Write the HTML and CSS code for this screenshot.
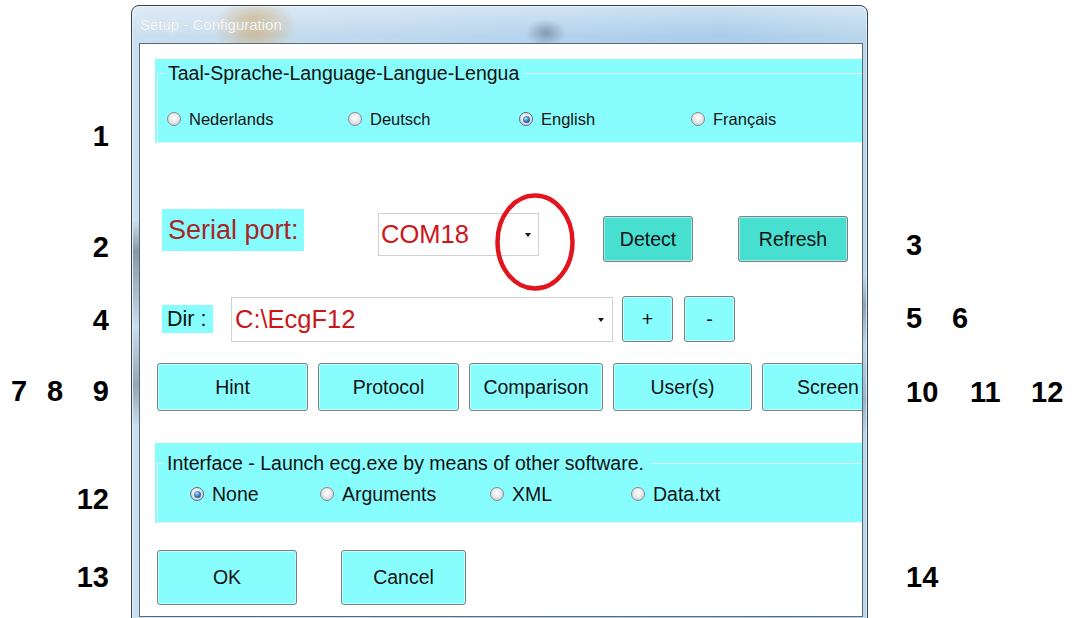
FILE: index.html
```html
<!DOCTYPE html>
<html lang="en">
<head>
<meta charset="utf-8">
<title>Setup - Configuration</title>
<link rel="stylesheet" href="styles.css">
</head>
<body>
<main class="sheet">
  <section class="window">
    <header class="titlebar"><span class="title">Setup - Configuration</span></header>
    <div class="client">

      <div class="group group-lang">
        <fieldset class="frame">
          <legend>Taal-Sprache-Language-Langue-Lengua</legend>
          <div class="options options-lang">
            <span class="option opt-nl"><i class="radio"></i>Nederlands</span>
            <span class="option opt-de"><i class="radio"></i>Deutsch</span>
            <span class="option opt-en"><i class="radio checked"></i>English</span>
            <span class="option"><i class="radio"></i>Français</span>
          </div>
        </fieldset>
      </div>

      <div class="row row-port">
        <span class="tag tag-port">Serial port:</span>
        <div class="combo combo-port">
          <span class="combo-text">COM18</span>
          <span class="caret"></span>
          <svg class="ring" width="80" height="98" viewBox="0 0 80 98"><ellipse cx="40" cy="49" rx="37.5" ry="46.5"/></svg>
        </div>
        <button class="btn btn-teal btn-detect">Detect</button>
        <button class="btn btn-teal btn-refresh">Refresh</button>
      </div>

      <div class="row row-dir">
        <span class="tag tag-dir">Dir :</span>
        <div class="combo combo-dir">
          <span class="combo-text">C:\EcgF12</span>
          <span class="caret"></span>
        </div>
        <button class="btn btn-small btn-plus">+</button>
        <button class="btn btn-small btn-minus">-</button>
      </div>

      <div class="row row-tabs">
        <button class="btn btn-hint">Hint</button>
        <button class="btn btn-protocol">Protocol</button>
        <button class="btn btn-compare">Comparison</button>
        <button class="btn btn-users">User(s)</button>
        <button class="btn btn-screen">Screen</button>
      </div>

      <div class="group group-if">
        <fieldset class="frame">
          <legend>Interface - Launch ecg.exe by means of other software.</legend>
          <div class="options options-if">
            <span class="option opt-none"><i class="radio checked"></i>None</span>
            <span class="option opt-args"><i class="radio"></i>Arguments</span>
            <span class="option opt-xml"><i class="radio"></i>XML</span>
            <span class="option"><i class="radio"></i>Data.txt</span>
          </div>
        </fieldset>
      </div>

      <div class="row row-actions">
        <button class="btn btn-ok">OK</button>
        <button class="btn btn-cancel">Cancel</button>
      </div>

    </div>
  </section>

  <span class="callout col-left c1">1</span>
  <span class="callout col-left c2">2</span>
  <span class="callout col-left c4">4</span>
  <span class="callout c7">7</span>
  <span class="callout c8">8</span>
  <span class="callout col-left c9">9</span>
  <span class="callout col-left c12a">12</span>
  <span class="callout col-left c13">13</span>

  <span class="callout c3">3</span>
  <span class="callout c5">5</span>
  <span class="callout c6">6</span>
  <span class="callout c10">10</span>
  <span class="callout c11">11</span>
  <span class="callout c12b">12</span>
  <span class="callout c14">14</span>
</main>
</body>
</html>
```

FILE: styles.css
```css
* { box-sizing: border-box; }

html, body {
  margin: 0;
  padding: 0;
  background: #fff;
  overflow: hidden;
}

body {
  width: 1074px;
  height: 618px;
  font-family: "Liberation Sans", Arial, Helvetica, sans-serif;
  color: #111;
}

.sheet {
  position: relative;
  width: 1074px;
  height: 618px;
  padding: 5px 0 0 131px;
}

/* ---------- window frame (glass) ---------- */
.window {
  width: 737px;
  height: 640px;
  display: flex;
  flex-direction: column;
  border: 1px solid #35414d;
  border-radius: 8px 8px 0 0;
  padding: 0 4px 0 7px;
  box-shadow: inset 0 0 0 1px rgba(255, 255, 255, 0.5);
  background:
    linear-gradient(180deg, transparent 215px, rgba(85, 95, 108, 0.55) 245px, rgba(85, 95, 108, 0.25) 290px, transparent 320px, rgba(85, 95, 108, 0.45) 380px, transparent 420px) 1px 0 / 7px 100% no-repeat,
    linear-gradient(180deg, transparent 270px, rgba(85, 95, 108, 0.45) 300px, transparent 340px, rgba(85, 95, 108, 0.3) 395px, transparent 430px) right 1px top 0 / 4px 100% no-repeat,
    radial-gradient(42px 30px at 123px 21px, rgba(205, 172, 120, 0.85), rgba(205, 172, 120, 0) 100%),
    radial-gradient(20px 14px at 414px 27px, rgba(70, 88, 108, 0.45), rgba(70, 88, 108, 0) 100%),
    linear-gradient(180deg, rgba(255, 255, 255, 0.4), rgba(255, 255, 255, 0) 30px),
    linear-gradient(90deg, #cadff0 0%, #bfd8ee 35%, #b2d2ec 60%, #a9cde9 80%, #b9d6ec 100%);
}

.titlebar {
  flex: none;
  height: 37px;
  display: flex;
  align-items: center;
  padding-left: 1px;
}

.title {
  font-size: 15px;
  color: rgba(255, 255, 255, 0.92);
  text-shadow: 0 0 6px rgba(255, 255, 255, 0.8), 0 0 1px rgba(110, 130, 150, 0.5);
}

/* ---------- client area ---------- */
.client {
  flex: none;
  width: 724px;
  height: 574px;
  border: 1px solid #5b6875;
  background: #fff;
  overflow: hidden;
  padding-left: 15px;
  display: flex;
  flex-direction: column;
  align-items: flex-start;
}

/* group boxes */
.group {
  flex: none;
  width: 720px;
  background: #88fdfd;
}

.group-lang {
  margin-top: 15px;
  height: 84px;
  padding: 3px 0 0 2px;
}

.group-if {
  margin-top: 32px;
  height: 80px;
  padding: 9px 0 0 2px;
}

.frame {
  margin: 0;
  padding: 0;
  min-inline-size: 0;
  border: 1px solid #e2f6f6;
  border-right: 0;
}

.group-lang .frame { height: 81px; }
.group-if .frame { height: 71px; }

.frame legend {
  padding: 0 7px 0 4px;
  font-size: 19.5px;
  line-height: 22px;
  color: #111;
}

.group-lang legend { margin-left: 6px; }
.group-if legend { margin-left: 5px; }

/* radio options */
.options {
  display: flex;
  align-items: center;
  height: 20px;
}

.options-lang {
  margin-top: 25px;
  padding-left: 9px;
  font-size: 16.5px;
}

.options-if {
  margin-top: 10px;
  padding-left: 32px;
  font-size: 19.5px;
}

.option {
  flex: none;
  display: flex;
  align-items: center;
  white-space: nowrap;
  color: #141414;
}

.opt-nl { width: 181px; }
.opt-de { width: 171px; }
.opt-en { width: 172px; }
.opt-none { width: 130px; }
.opt-args { width: 170px; }
.opt-xml { width: 141px; }

.radio {
  position: relative;
  flex: none;
  width: 14px;
  height: 14px;
  margin-right: 8px;
  border-radius: 50%;
  border: 1px solid #878a8d;
  background: radial-gradient(circle at 50% 40%, #ffffff 0%, #e9eaeb 45%, #c2c4c6 100%);
}

.radio.checked {
  border-color: #56677a;
}

.radio.checked::after {
  content: "";
  position: absolute;
  left: 2.5px;
  top: 2.5px;
  width: 7px;
  height: 7px;
  border-radius: 50%;
  background: radial-gradient(circle at 40% 35%, #bfe0ff 0%, #3b7fcb 45%, #12336a 100%);
}

/* ---------- rows ---------- */
.row {
  flex: none;
  display: flex;
  align-items: flex-start;
}

.tag {
  flex: none;
  display: flex;
  align-items: center;
  white-space: nowrap;
  background: #88fdfd;
}

.combo {
  position: relative;
  flex: none;
  display: flex;
  align-items: center;
  background: #fff;
  border: 1px solid #cfd1d3;
}

.combo-text {
  flex: 1;
  white-space: nowrap;
}

.caret {
  flex: none;
  width: 0;
  height: 0;
  border-left: 3.5px solid transparent;
  border-right: 3.5px solid transparent;
  border-top: 4px solid #151515;
}

.btn {
  flex: none;
  display: flex;
  align-items: center;
  justify-content: center;
  padding: 0;
  font-family: "Liberation Sans", Arial, Helvetica, sans-serif;
  font-size: 19.5px;
  color: #121212;
  background: #88fdfd;
  border: 1px solid #7d7f80;
  border-radius: 3px;
  box-shadow: inset 0 0 0 1px rgba(255, 255, 255, 0.45);
}

/* serial port row */
.row-port { margin-top: 66px; }

.tag-port {
  margin-left: 7px;
  width: 142px;
  height: 42px;
  padding-left: 6px;
  font-size: 27px;
  color: #a82626;
}

.combo-port {
  margin: 4px 0 0 74px;
  width: 161px;
  height: 43px;
  padding: 0 7px 0 2px;
  font-size: 25.5px;
  color: #d0161c;
}

.ring {
  position: absolute;
  left: 116px;
  top: -21px;
  overflow: visible;
  fill: none;
  stroke: #e2141d;
  stroke-width: 4.5;
}

.btn-teal {
  margin-top: 7px;
  height: 46px;
  background: #47dfd0;
}

.btn-detect { margin-left: 64px; width: 90px; }
.btn-refresh { margin-left: 45px; width: 110px; }

/* directory row */
.row-dir { margin-top: 34px; }

.tag-dir {
  margin: 9px 0 0 7px;
  width: 51px;
  height: 28px;
  padding-left: 5px;
  font-size: 21.5px;
  color: #111;
}

.combo-dir {
  margin: 1px 0 0 18px;
  width: 382px;
  height: 45px;
  padding: 0 8px 0 3px;
  font-size: 25.5px;
  color: #c91818;
}

.btn-small {
  width: 51px;
  height: 46px;
  margin-left: 9px;
}

.btn-minus { margin-left: 11px; }

/* button strip */
.row-tabs {
  margin-top: 21px;
  padding-left: 2px;
  gap: 10px;
}

.row-tabs .btn { height: 48px; }
.btn-hint { width: 151px; }
.btn-protocol { width: 141px; }
.btn-compare { width: 134px; }
.btn-users { width: 139px; }
.btn-screen { width: 132px; }

/* OK / Cancel */
.row-actions {
  margin-top: 27px;
  padding-left: 2px;
  gap: 44px;
}

.row-actions .btn { height: 55px; }
.btn-ok { width: 140px; }
.btn-cancel { width: 125px; }

/* ---------- numbered callouts beside the dialog ---------- */
.callout {
  position: absolute;
  font-size: 29px;
  line-height: 29px;
  font-weight: 700;
  color: #000;
}

.col-left {
  left: 0;
  width: 109px;
  text-align: right;
}

.c1 { top: 122px; }
.c2 { top: 233px; }
.c4 { top: 306px; }
.c7 { left: 11px; top: 377px; }
.c8 { left: 47px; top: 377px; }
.c9 { top: 377px; }
.c12a { top: 485px; }
.c13 { top: 563px; }

.c3 { left: 906px; top: 231px; }
.c5 { left: 906px; top: 304px; }
.c6 { left: 952px; top: 304px; }
.c10 { left: 906px; top: 378px; }
.c11 { left: 970px; top: 378px; }
.c12b { left: 1031px; top: 378px; }
.c14 { left: 906px; top: 563px; }
```
